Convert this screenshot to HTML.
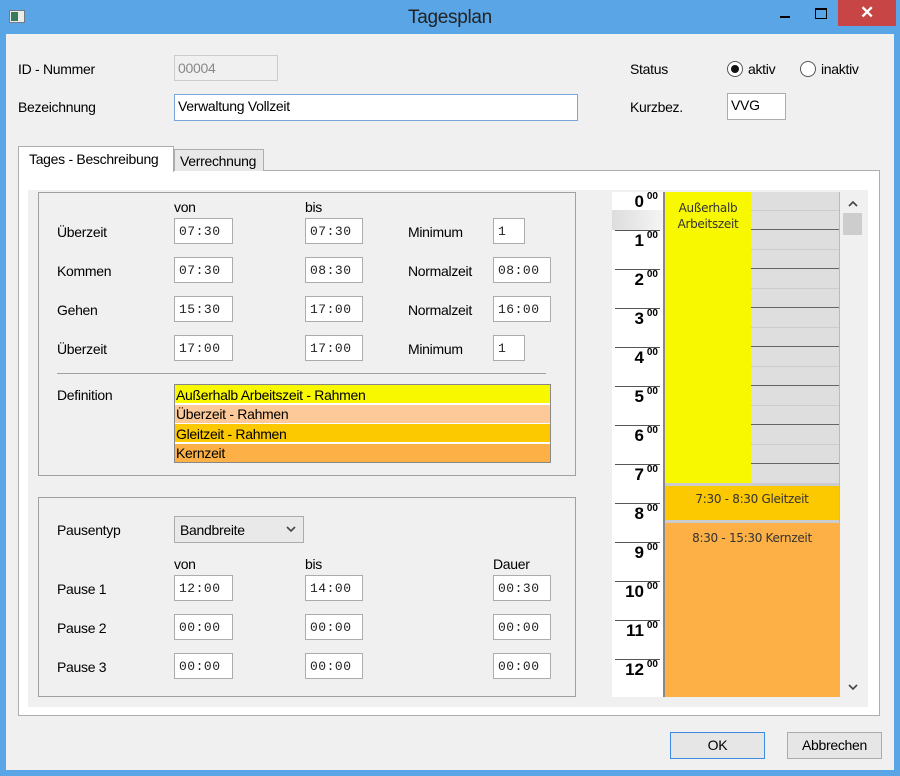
<!DOCTYPE html><html><head><meta charset="utf-8"><style>
*{box-sizing:border-box;margin:0;padding:0}
body{width:900px;height:776px;position:relative;background:#5aa5e6;font-family:"Liberation Sans",sans-serif;font-size:14px;color:#000;overflow:hidden;letter-spacing:-0.3px}
.a{position:absolute}
.t{position:absolute;white-space:nowrap}
.box{position:absolute;background:#fff;border:1px solid #acacac;height:26px;font-family:"Liberation Mono",monospace;font-size:13px;padding:5px 0 0 4px;color:#222;letter-spacing:0.5px}
.hr{position:absolute;left:612px;width:48px;font-weight:bold;font-size:17px;text-align:right;padding-right:16px;letter-spacing:0}
.hr sup{position:absolute;right:2px;top:-1px;font-size:10px;}
.hl{position:absolute;left:615px;width:45px;height:1px;background:#555}
.gl{position:absolute;left:751px;width:88px;height:1px}
</style></head><body>
<div class="a" style="left:6px;top:34px;width:888px;height:736px;background:#f0f0f0"></div>
<div class="a" style="left:9px;top:10px;width:16px;height:13px;background:#e8efe8;border:1px solid #778"></div>
<div class="a" style="left:11px;top:12px;width:7px;height:9px;background:#3a7a5a"></div>
<div class="t" style="left:0;width:900px;text-align:center;top:7px;font-size:19px;color:#222">Tagesplan</div>
<div class="a" style="left:780px;top:16px;width:10px;height:2px;background:#000"></div>
<div class="a" style="left:815px;top:8px;width:12px;height:11px;border:1px solid #000;border-top-width:2px"></div>
<div class="a" style="left:838px;top:0;width:58px;height:26px;background:#c74545"></div>
<div class="t" style="left:838px;width:58px;text-align:center;top:3px;color:#fff;font-size:17px;font-weight:bold">✕</div>

<div class="t" style="left:18px;top:61px">ID - Nummer</div>
<div class="t" style="left:18px;top:99px">Bezeichnung</div>
<div class="a" style="left:174px;top:55px;width:104px;height:26px;border:1px solid #ccc;background:#f0f0f0"></div>
<div class="t" style="left:178px;top:60px;color:#888">00004</div>
<div class="a" style="left:174px;top:94px;width:404px;height:27px;border:1px solid #7aa7d8;background:#fff"></div>
<div class="t" style="left:178px;top:98px">Verwaltung Vollzeit</div>
<div class="t" style="left:630px;top:61px">Status</div>
<div class="a" style="left:727px;top:61px;width:16px;height:16px;border:1px solid #555;border-radius:50%;background:#fff"></div>
<div class="a" style="left:731px;top:65px;width:8px;height:8px;border-radius:50%;background:#111"></div>
<div class="t" style="left:748px;top:61px">aktiv</div>
<div class="a" style="left:800px;top:61px;width:16px;height:16px;border:1px solid #555;border-radius:50%;background:#fff"></div>
<div class="t" style="left:821px;top:61px">inaktiv</div>
<div class="t" style="left:630px;top:99px">Kurzbez.</div>
<div class="a" style="left:727px;top:93px;width:59px;height:27px;border:1px solid #acacac;background:#fff"></div>
<div class="t" style="left:731px;top:97px">VVG</div>

<div class="a" style="left:18px;top:170px;width:862px;height:546px;background:#fff;border:1px solid #adadad"></div>
<div class="a" style="left:28px;top:190px;width:840px;height:517px;background:#f0f0f0"></div>
<div class="a" style="left:18px;top:146px;width:156px;height:26px;background:#fff;border:1px solid #adadad;border-bottom:none"></div>
<div class="t" style="left:29px;top:151px">Tages - Beschreibung</div>
<div class="a" style="left:174px;top:149px;width:90px;height:22px;background:#e8e8e8;border:1px solid #adadad;border-bottom:none"></div>
<div class="t" style="left:180px;top:153px">Verrechnung</div>

<div class="a" style="left:38px;top:192px;width:538px;height:284px;border:1px solid #a0a0a0"></div>
<div class="t" style="left:174px;top:199px">von</div><div class="t" style="left:305px;top:199px">bis</div>
<div class="t" style="left:57px;top:224px">Überzeit</div><div class="box" style="left:174px;top:218px;width:59px">07:30</div><div class="box" style="left:305px;top:218px;width:58px">07:30</div><div class="t" style="left:408px;top:224px">Minimum</div><div class="box" style="left:493px;top:218px;width:32px">1</div>
<div class="t" style="left:57px;top:263px">Kommen</div><div class="box" style="left:174px;top:257px;width:59px">07:30</div><div class="box" style="left:305px;top:257px;width:58px">08:30</div><div class="t" style="left:408px;top:263px">Normalzeit</div><div class="box" style="left:493px;top:257px;width:58px">08:00</div>
<div class="t" style="left:57px;top:302px">Gehen</div><div class="box" style="left:174px;top:296px;width:59px">15:30</div><div class="box" style="left:305px;top:296px;width:58px">17:00</div><div class="t" style="left:408px;top:302px">Normalzeit</div><div class="box" style="left:493px;top:296px;width:58px">16:00</div>
<div class="t" style="left:57px;top:341px">Überzeit</div><div class="box" style="left:174px;top:335px;width:59px">17:00</div><div class="box" style="left:305px;top:335px;width:58px">17:00</div><div class="t" style="left:408px;top:341px">Minimum</div><div class="box" style="left:493px;top:335px;width:32px">1</div>
<div class="a" style="left:57px;top:373px;width:489px;height:1px;background:#a0a0a0"></div>
<div class="t" style="left:57px;top:387px">Definition</div>
<div class="a" style="left:174px;top:384px;width:377px;height:79px;border:1px solid #888;background:#fff"></div>
<div class="a" style="left:175px;top:385px;width:375px;height:18px;background:#f8f800"></div>
<div class="a" style="left:175px;top:405px;width:375px;height:18px;background:#fdc998"></div>
<div class="a" style="left:175px;top:424px;width:375px;height:18px;background:#fcc800"></div>
<div class="a" style="left:175px;top:444px;width:375px;height:18px;background:#fcb045"></div>
<div class="t" style="left:176px;top:387px">Außerhalb Arbeitszeit - Rahmen</div>
<div class="t" style="left:176px;top:406px">Überzeit - Rahmen</div>
<div class="t" style="left:176px;top:426px">Gleitzeit - Rahmen</div>
<div class="t" style="left:176px;top:445px">Kernzeit</div>

<div class="a" style="left:38px;top:497px;width:538px;height:200px;border:1px solid #a0a0a0"></div>
<div class="t" style="left:57px;top:522px">Pausentyp</div>
<div class="a" style="left:174px;top:516px;width:130px;height:27px;border:1px solid #acacac;background:#e9e9e9"></div>
<div class="t" style="left:180px;top:522px">Bandbreite</div>
<svg class="a" style="left:286px;top:525px" width="10" height="8"><path d="M1 2 L5 6 L9 2" fill="none" stroke="#444" stroke-width="1.6"/></svg>
<div class="t" style="left:174px;top:556px">von</div><div class="t" style="left:305px;top:556px">bis</div><div class="t" style="left:493px;top:556px">Dauer</div>
<div class="t" style="left:57px;top:581px">Pause 1</div><div class="box" style="left:174px;top:575px;width:59px">12:00</div><div class="box" style="left:305px;top:575px;width:58px">14:00</div><div class="box" style="left:493px;top:575px;width:58px">00:30</div>
<div class="t" style="left:57px;top:620px">Pause 2</div><div class="box" style="left:174px;top:614px;width:59px">00:00</div><div class="box" style="left:305px;top:614px;width:58px">00:00</div><div class="box" style="left:493px;top:614px;width:58px">00:00</div>
<div class="t" style="left:57px;top:659px">Pause 3</div><div class="box" style="left:174px;top:653px;width:59px">00:00</div><div class="box" style="left:305px;top:653px;width:58px">00:00</div><div class="box" style="left:493px;top:653px;width:58px">00:00</div>

<div class="a" style="left:612px;top:192px;width:52px;height:505px;background:#fff"></div>
<div class="a" style="left:612px;top:210px;width:52px;height:20px;background:linear-gradient(90deg,#ddd,#f5f5f5)"></div>
<div class="a" style="left:663px;top:192px;width:2px;height:505px;background:#888"></div>
<div class="a" style="left:665px;top:192px;width:86px;height:291px;background:#f8f800"></div>
<div class="a" style="left:751px;top:192px;width:88px;height:291px;background:#dedede"></div>
<div class="a" style="left:665px;top:483px;width:174px;height:3px;background:#ccc"></div>
<div class="a" style="left:665px;top:486px;width:174px;height:34px;background:#fcc800"></div>
<div class="a" style="left:665px;top:520px;width:174px;height:3px;background:#ccc"></div>
<div class="a" style="left:665px;top:523px;width:174px;height:174px;background:#fcb045"></div>
<div class="a" style="left:839px;top:192px;width:1px;height:505px;background:#bbb"></div>
<div class="t" style="left:665px;width:86px;text-align:center;top:200px;font-family:'DejaVu Sans',sans-serif;font-size:12px;line-height:16px;color:#333">Außerhalb<br>Arbeitszeit</div>
<div class="t" style="left:665px;width:174px;text-align:center;top:492px;font-family:'DejaVu Sans',sans-serif;font-size:12px;color:#333">7:30 - 8:30 Gleitzeit</div>
<div class="t" style="left:665px;width:174px;text-align:center;top:531px;font-family:'DejaVu Sans',sans-serif;font-size:12px;color:#333">8:30 - 15:30 Kernzeit</div>
<div class="gl" style="top:210px;background:#ccc"></div><div class="gl" style="top:229px;background:#666"></div>
<div class="gl" style="top:249px;background:#ccc"></div><div class="gl" style="top:268px;background:#666"></div>
<div class="gl" style="top:288px;background:#ccc"></div><div class="gl" style="top:307px;background:#666"></div>
<div class="gl" style="top:327px;background:#ccc"></div><div class="gl" style="top:346px;background:#666"></div>
<div class="gl" style="top:366px;background:#ccc"></div><div class="gl" style="top:385px;background:#666"></div>
<div class="gl" style="top:405px;background:#ccc"></div><div class="gl" style="top:424px;background:#666"></div>
<div class="gl" style="top:444px;background:#ccc"></div><div class="gl" style="top:463px;background:#666"></div>
<div class="hr" style="top:192px">0<sup>00</sup></div><div class="hl" style="top:230px"></div>
<div class="hr" style="top:231px">1<sup>00</sup></div><div class="hl" style="top:269px"></div>
<div class="hr" style="top:270px">2<sup>00</sup></div><div class="hl" style="top:308px"></div>
<div class="hr" style="top:309px">3<sup>00</sup></div><div class="hl" style="top:347px"></div>
<div class="hr" style="top:348px">4<sup>00</sup></div><div class="hl" style="top:386px"></div>
<div class="hr" style="top:387px">5<sup>00</sup></div><div class="hl" style="top:425px"></div>
<div class="hr" style="top:426px">6<sup>00</sup></div><div class="hl" style="top:464px"></div>
<div class="hr" style="top:465px">7<sup>00</sup></div><div class="hl" style="top:503px"></div>
<div class="hr" style="top:504px">8<sup>00</sup></div><div class="hl" style="top:542px"></div>
<div class="hr" style="top:543px">9<sup>00</sup></div><div class="hl" style="top:581px"></div>
<div class="hr" style="top:582px">10<sup>00</sup></div><div class="hl" style="top:620px"></div>
<div class="hr" style="top:621px">11<sup>00</sup></div><div class="hl" style="top:659px"></div>
<div class="hr" style="top:660px">12<sup>00</sup></div>
<svg class="a" style="left:848px;top:200px" width="10" height="8"><path d="M1 6 L5 2 L9 6" fill="none" stroke="#444" stroke-width="1.6"/></svg>
<div class="a" style="left:843px;top:213px;width:19px;height:22px;background:#cdcdcd"></div>
<svg class="a" style="left:848px;top:683px" width="10" height="8"><path d="M1 2 L5 6 L9 2" fill="none" stroke="#444" stroke-width="1.6"/></svg>

<div class="a" style="left:670px;top:732px;width:95px;height:27px;border:1px solid #3c8be0;background:#e6e6e6"></div>
<div class="t" style="left:670px;width:95px;text-align:center;top:737px">OK</div>
<div class="a" style="left:787px;top:732px;width:95px;height:27px;border:1px solid #acacac;background:#e6e6e6"></div>
<div class="t" style="left:787px;width:95px;text-align:center;top:737px">Abbrechen</div>
</body></html>
